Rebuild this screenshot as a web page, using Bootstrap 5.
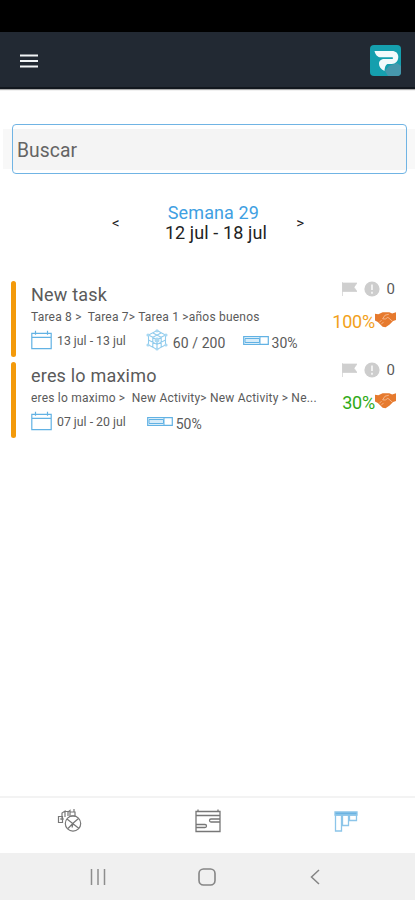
<!DOCTYPE html>
<html lang="es">
<head>
<meta charset="utf-8">
<meta name="viewport" content="width=device-width, initial-scale=1">
<title>Semana 29</title>
<link href="https://cdn.jsdelivr.net/npm/bootstrap@5.3.0/dist/css/bootstrap.min.css" rel="stylesheet">
<style>
body{font-family:Roboto,"Liberation Sans",sans-serif;color:#5a5a5a;background:#fff;overflow:hidden}
svg{display:block;flex:none}
.status-strip{height:32px;background:#000}
.topbar{height:57px;background:#222933;border-bottom:2px solid #12171e;padding:2px 14px 0 20px;box-shadow:0 1px 1px #0005}
.search-zone{margin-top:35px;padding:0 8px 0 12px;background:linear-gradient(#f8f8f8,#f8f8f8) 3px 5px/412px 40px no-repeat}
.search-box{height:50px;border:1px solid #70b4e4;border-radius:4px;padding:2px 4px 0;color:#5c5c5c;font-size:19.3px;letter-spacing:.05px;background:linear-gradient(#f4f4f4,#f4f4f4) 0 4px/100% 41px no-repeat #fff}
.search-box::placeholder{color:#646464;opacity:1}
.search-box:focus{border-color:#70b4e4;box-shadow:none}
.week{margin-top:29px;height:40px;padding:0 112px;font-size:18px;line-height:20px;color:#222}
.week button{font-size:15px;line-height:20px;color:#222}
.week button:last-child{margin-right:-1px}
.week-name{color:#3fa0e2;letter-spacing:.1px;margin-right:5px}
.week-dates{letter-spacing:.1px}
.week-label{margin-left:16px}
.tasks{padding:0 11px;margin-top:38px}
.task{height:76px;margin-bottom:5px}
.task-bar{width:5px;border-radius:3px;background:#f39a0b}
.task-main{margin-left:15px;width:290px}
.task-title{font-size:18px;line-height:22px;margin-top:3px;letter-spacing:.2px}
.crumbs{font-size:12px;line-height:16px;margin-top:3px;white-space:pre;letter-spacing:.2px}
.meta{height:22px;margin-top:4px;font-size:14px}
.meta .dates{font-size:12.3px;margin:3px 0 0 5px}
.meta .val{line-height:16px;margin-top:6px}
.side{width:80px;padding-right:8px}
.flags{height:16px;font-size:15px;gap:7px;margin-right:1px}
.score{font-size:18px;line-height:22px;margin-top:14px;letter-spacing:-.2px}
.tabs{height:57px;border-top:2px solid #f3f3f3;padding-bottom:9px}
.sysnav{height:47px;background:#f0f0f0}
</style>
<script src="https://cdn.jsdelivr.net/npm/bootstrap@5.3.0/dist/js/bootstrap.bundle.min.js"></script>
</head>
<body>
<svg width="0" height="0" class="position-absolute" aria-hidden="true">
<symbol id="cal" viewBox="0 0 21 20"><path d="M.8 3.3h19.400v15.400H.8zM.8 7.400h19.400M4.500.8v4M16.500.8v4" fill="none" stroke="#62b2e4" stroke-width="1.200"/></symbol>
<symbol id="flag" viewBox="0 0 15 14"><path d="M.5 0v14M.5 1H15l-3 4.200 3 4.300H.5z" fill="#cfcfcf" stroke="#cfcfcf" stroke-width=".7"/></symbol>
<symbol id="alert" viewBox="0 0 16 16"><circle cx="8" cy="8" r="7.600" fill="#cdcdcd"/><path d="M8 3.500v5.600M8 10.800v2" stroke="#f4f4f4" stroke-width="1.800"/></symbol>
<symbol id="hands" viewBox="0 0 22 17"><path d="M0 2.500 3.500 3 8 1h7l3 1.200L22 1v8l-3 1-4 4-4 2.500-3-.5-5-5L0 9.500z" fill="#e67a2e"/><path d="M14.500 3 10.500 4 8 7.800l2.800.2 2.700-1.800 5 4.300M4.500 11.500l2.300-2.300M6.500 13.500l2.500-2.500" fill="none" stroke="#f8c8a6" stroke-width=".8"/></symbol>
</svg>
<div class="d-flex flex-column vh-100">
<div class="status-strip"></div>
<header class="topbar d-flex align-items-center justify-content-between">
<svg width="18" height="14" viewBox="0 0 18 14"><path d="M0 1.500h18M0 7h18M0 12.500h18" stroke="#f1f4f6" stroke-width="2.200"/></svg>
<svg width="31" height="31" viewBox="0 0 31 31"><rect width="31" height="31" rx="4" fill="#159fae"/><path d="m15 26 4-5 8-3 4 3v6a4 4 0 0 1-4 4H18z" fill="#4697ac"/><path d="M4.500 6H22c3.800 0 6.300 2.300 6.300 5.800 0 4.200-2.800 7.200-6.500 7.200h-3.600c-2.200 0-3.200 2-3.700 7-3.800-2-5.500-4.600-5.500-7.300 0-3 2.200-4.700 5.500-4.700h7.500c1.500 0 1.500-1.700 0-1.700H11C7.500 12.300 5.600 10 4.500 6z" fill="#f3fafb"/></svg>
</header>
<div class="search-zone"><input class="search-box form-control" type="text" placeholder="Buscar" aria-label="Buscar"></div>
<div class="week d-flex justify-content-between align-items-center">
<button class="btn p-0 border-0">&lt;</button>
<div class="week-label text-center"><div class="week-name">Semana 29</div><div class="week-dates">12 jul - 18 jul</div></div>
<button class="btn p-0 border-0">&gt;</button>
</div>
<main class="tasks flex-grow-1">
<article class="task d-flex">
<div class="task-bar"></div>
<div class="task-main">
<div class="task-title">New task</div>
<div class="crumbs">Tarea 8 &gt;  Tarea 7&gt; Tarea 1 &gt;años buenos</div>
<div class="meta d-flex align-items-center">
<svg width="21" height="20"><use href="#cal"/></svg><span class="dates">13 jul - 13 jul</span>
<svg style="margin-left:20px" width="22" height="22" viewBox="0 0 22 22"><path d="M11 1.500 19.500 6v10L11 20.500 2.500 16V6zM2.500 6 11 10.500 19.500 6M11 10.500v10M6.500 3.800l8.700 4.500v10M15.500 3.800 6.800 8.300v10M2.500 11l8.500 4.500 8.500-4.500" fill="none" stroke="#8fcbed" stroke-width="1.100"/><g fill="#a9d8f2"><circle cx="11" cy="1.800" r="1.600"/><circle cx="2" cy="6" r="1.600"/><circle cx="20" cy="6" r="1.600"/><circle cx="2" cy="16" r="1.600"/><circle cx="20" cy="16" r="1.600"/><circle cx="11" cy="20" r="1.600"/><circle cx="11" cy="11" r="2.500"/></g></svg>
<span class="val" style="margin-left:5px;letter-spacing:.1px">60 / 200</span>
<svg style="margin-left:17px" width="26" height="9" viewBox="0 0 26 9"><path d="M.7.700h24.600v7.600H.7z" fill="#fff" stroke="#62b2e4" stroke-width="1.200"/><path d="M2 2.500h14.500v4H2zM17 1v7" fill="#d7ecf9" stroke="#62b2e4"/></svg>
<span class="val" style="margin-left:3px">30%</span>
</div>
</div>
<div class="side ms-auto d-flex flex-column align-items-end">
<div class="flags d-flex align-items-center"><svg width="15" height="14"><use href="#flag"/></svg><svg width="16" height="16"><use href="#alert"/></svg><span>0</span></div>
<div class="score d-flex align-items-start" style="color:#f2a11b"><span>100%</span><svg width="21" height="17"><use href="#hands"/></svg></div>
</div>
</article>
<article class="task d-flex">
<div class="task-bar"></div>
<div class="task-main">
<div class="task-title">eres lo maximo</div>
<div class="crumbs">eres lo maximo &gt;  New Activity&gt; New Activity &gt; Ne...</div>
<div class="meta d-flex align-items-center">
<svg width="21" height="20"><use href="#cal"/></svg><span class="dates">07 jul - 20 jul</span>
<svg style="margin-left:21px" width="26" height="9" viewBox="0 0 26 9"><path d="M.7.700h24.600v7.600H.7z" fill="#fff" stroke="#62b2e4" stroke-width="1.200"/><path d="M2 2.500h14.500v4H2zM17 1v7" fill="#d7ecf9" stroke="#62b2e4"/></svg>
<span class="val" style="margin-left:3px">50%</span>
</div>
</div>
<div class="side ms-auto d-flex flex-column align-items-end">
<div class="flags d-flex align-items-center"><svg width="15" height="14"><use href="#flag"/></svg><svg width="16" height="16"><use href="#alert"/></svg><span>0</span></div>
<div class="score d-flex align-items-start" style="color:#30aa16"><span>30%</span><svg width="21" height="17"><use href="#hands"/></svg></div>
</div>
</article>
</main>
<nav class="tabs row g-0 align-items-center">
<div class="col d-flex justify-content-center"><svg style="margin-left:2px" width="26" height="26" viewBox="0 0 26 26" fill="none" stroke="#777" stroke-width="1.200"><circle cx="16" cy="15.500" r="7.700"/><path d="M10 11l12 9.500M21.500 10.500 16 15.300 11 20.500M16 15.500l-1 4M1.500 8.500h4v6h-4zM3 11h4M5 12V5l3-2v6M8 3.500h3V8M11 4l2-1.500V8M13 4h5v4h-4M17 4V1"/></svg></div>
<div class="col d-flex justify-content-center"><svg style="margin-left:1px" width="26" height="24" viewBox="0 0 26 24" fill="none" stroke="#777" stroke-width="1.300"><path d="M1 2.500h24v20H1zM1 6.500h24M3 .5v2M23 .5v2M25 10H16a1.500 1.500 0 0 0 0 3h9M1 15.500h9a1.500 1.500 0 0 1 0 3H1"/></svg></div>
<div class="col d-flex justify-content-center"><svg width="24" height="21" viewBox="0 0 24 21" fill="none" stroke="#8cc5e9" stroke-width="1.300"><path fill="#6bb3e2" d="M1 1h22v3H1z"/><path d="M1.500 4h6v16h-6zM8.500 4h6v10.500h-6zM15.500 4h7v5.500h-7z"/></svg></div>
</nav>
<footer class="sysnav row g-0 align-items-center">
<div class="col-4 d-flex justify-content-center"><svg style="margin-left:58px" width="16" height="16" viewBox="0 0 16 16"><path d="M1.500 0v16M8 0v16M14.500 0v16" stroke="#8d8d8d" stroke-width="1.500"/></svg></div>
<div class="col-4 d-flex justify-content-center"><svg width="18" height="18" viewBox="0 0 18 18"><rect x="1" y="1" width="16" height="16" rx="4.500" fill="none" stroke="#858585" stroke-width="1.600"/></svg></div>
<div class="col-4 d-flex justify-content-center"><svg style="margin-right:62px" width="10" height="16" viewBox="0 0 10 16"><path d="M9 1 1.500 8 9 15" fill="none" stroke="#858585" stroke-width="1.500"/></svg></div>
</footer>
</div>
</body>
</html>
